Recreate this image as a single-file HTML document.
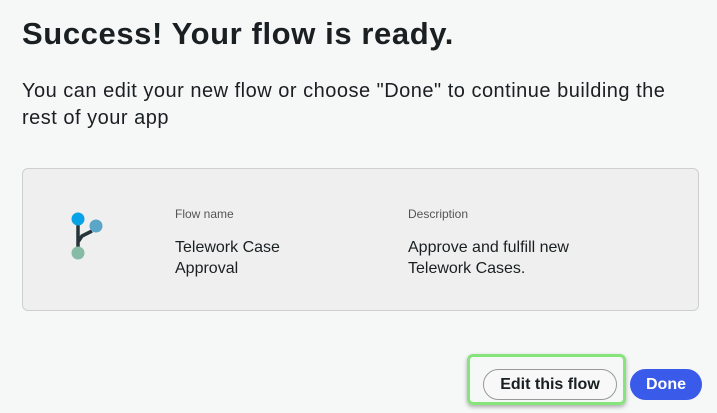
<!DOCTYPE html>
<html><head><style>
body{margin:0;width:717px;height:413px;background:#f6f7f7;font-family:"Liberation Sans",sans-serif;color:#1a1f22;position:relative;overflow:hidden}
.t{position:absolute;left:22px;top:16px;font-size:31px;font-weight:bold;margin:0;letter-spacing:0.6px}
.p{position:absolute;left:22px;top:78px;font-size:20px;line-height:27px;width:680px;letter-spacing:0.5px}
.card{position:absolute;left:22px;top:168px;width:677px;height:143px;background:#efefef;border:1px solid #cfcfcf;border-radius:6px;box-sizing:border-box}
.lbl{position:absolute;font-size:12px;color:#555}
.val{position:absolute;font-size:16px;line-height:21px;color:#1a1f22}
.hl{position:absolute;left:467px;top:354px;width:159px;height:51px;border:3px solid #86e57a;border-radius:6px;box-sizing:border-box;box-shadow:0 2px 4px rgba(0,0,0,.3)}
.b1{position:absolute;left:483px;top:369px;width:134px;height:31px;border:1px solid #999;border-radius:16px;box-sizing:border-box;background:#f8f8f8;font-size:16px;font-weight:bold;text-align:center;line-height:29px}
.b2{position:absolute;left:630px;top:369px;width:72px;height:31px;border-radius:16px;background:#3a5bea;color:#fff;font-size:16px;font-weight:bold;text-align:center;line-height:31px}
</style></head><body>
<h1 class="t">Success! Your flow is ready.</h1>
<div class="p">You can edit your new flow or choose "Done" to continue building the rest of your app</div>
<div class="card">
<div class="lbl" style="left:152px;top:38px">Flow name</div>
<div class="val" style="left:152px;top:68px">Telework Case<br>Approval</div>
<div class="lbl" style="left:385px;top:38px">Description</div>
<div class="val" style="left:385px;top:68px">Approve and fulfill new<br>Telework Cases.</div>
</div>
<svg style="position:absolute;left:60px;top:206px" width="50" height="60" viewBox="60 206 50 60">
<path d="M78 222V250M78 242L82 236L92 231" stroke="#27353a" stroke-width="3.5" fill="none"/>
<circle cx="78" cy="219" r="6.5" fill="#0aa2e6"/>
<circle cx="96" cy="226" r="6.5" fill="#5aa5c8"/>
<circle cx="78" cy="253" r="6.5" fill="#86bba5"/>
</svg>
<div class="hl"></div>
<div class="b1">Edit this flow</div>
<div class="b2">Done</div>
</body></html>
